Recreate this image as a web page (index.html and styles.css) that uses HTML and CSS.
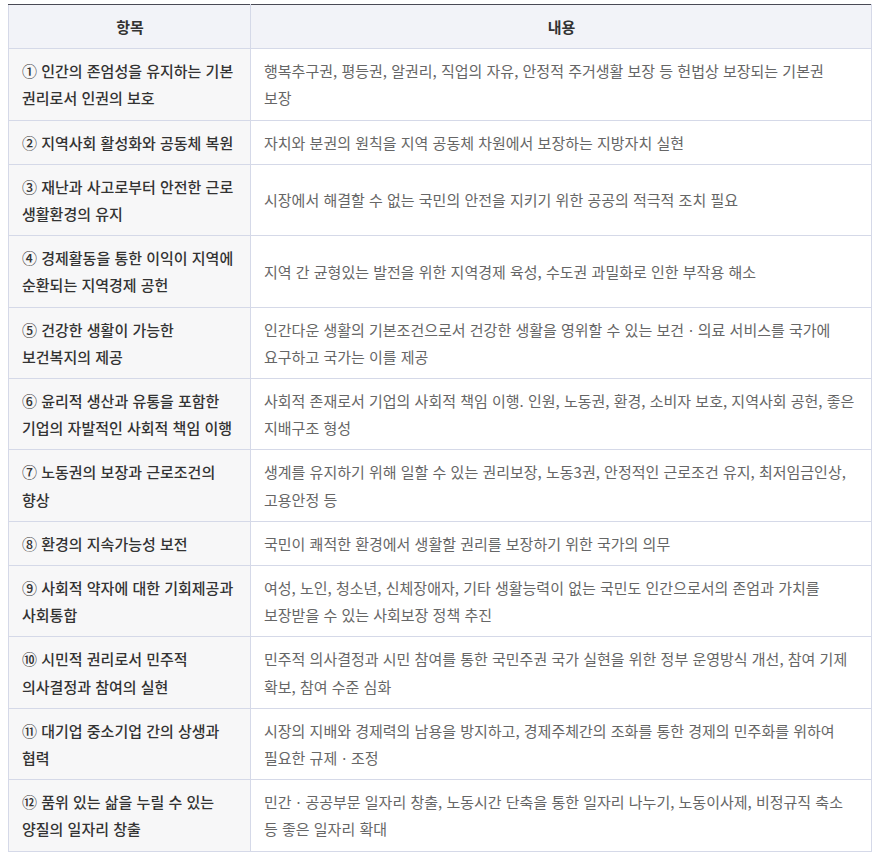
FILE: index.html
```html
<!DOCTYPE html>
<html lang="ko">
<head>
  <meta charset="UTF-8" />
  <title>항목과 내용</title>
  <link rel="stylesheet" href="styles.css">
</head>
<body>
  <div class="wrap">
    <table class="info-table">
      <colgroup>
        <col class="col-item" />
        <col class="col-desc" />
      </colgroup>
      <thead>
        <tr>
          <th>항목</th>
          <th>내용</th>
        </tr>
      </thead>
      <tbody>
        <tr>
          <td class="item">① 인간의 존엄성을 유지하는 기본 권리로서 인권의 보호</td>
          <td>행복추구권, 평등권, 알권리, 직업의 자유, 안정적 주거생활 보장 등 헌법상 보장되는 기본권<br>보장</td>
        </tr>
        <tr>
          <td class="item">② 지역사회 활성화와 공동체 복원</td>
          <td>자치와 분권의 원칙을 지역 공동체 차원에서 보장하는 지방자치 실현</td>
        </tr>
        <tr>
          <td class="item">③ 재난과 사고로부터 안전한 근로 생활환경의 유지</td>
          <td>시장에서 해결할 수 없는 국민의 안전을 지키기 위한 공공의 적극적 조치 필요</td>
        </tr>
        <tr>
          <td class="item">④ 경제활동을 통한 이익이 지역에 순환되는 지역경제 공헌</td>
          <td>지역 간 균형있는 발전을 위한 지역경제 육성, 수도권 과밀화로 인한 부작용 해소</td>
        </tr>
        <tr>
          <td class="item">⑤ 건강한 생활이 가능한<br>보건복지의 제공</td>
          <td>인간다운 생활의 기본조건으로서 건강한 생활을 영위할 수 있는 보건ㆍ의료 서비스를 국가에 요구하고 국가는 이를 제공</td>
        </tr>
        <tr>
          <td class="item">⑥ 윤리적 생산과 유통을 포함한 기업의 자발적인 사회적 책임 이행</td>
          <td>사회적 존재로서 기업의 사회적 책임 이행. 인원, 노동권, 환경, 소비자 보호, 지역사회 공헌, 좋은 지배구조 형성</td>
        </tr>
        <tr>
          <td class="item">⑦ 노동권의 보장과 근로조건의 향상</td>
          <td>생계를 유지하기 위해 일할 수 있는 권리보장, 노동3권, 안정적인 근로조건 유지, 최저임금인상, 고용안정 등</td>
        </tr>
        <tr>
          <td class="item">⑧ 환경의 지속가능성 보전</td>
          <td>국민이 쾌적한 환경에서 생활할 권리를 보장하기 위한 국가의 의무</td>
        </tr>
        <tr>
          <td class="item">⑨ 사회적 약자에 대한 기회제공과 사회통합</td>
          <td>여성, 노인, 청소년, 신체장애자, 기타 생활능력이 없는 국민도 인간으로서의 존엄과 가치를 보장받을 수 있는 사회보장 정책 추진</td>
        </tr>
        <tr>
          <td class="item">⑩ 시민적 권리로서 민주적<br>의사결정과 참여의 실현</td>
          <td>민주적 의사결정과 시민 참여를 통한 국민주권 국가 실현을 위한 정부 운영방식 개선, 참여 기제 확보, 참여 수준 심화</td>
        </tr>
        <tr>
          <td class="item">⑪ 대기업 중소기업 간의 상생과 협력</td>
          <td>시장의 지배와 경제력의 남용을 방지하고, 경제주체간의 조화를 통한 경제의 민주화를 위하여 필요한 규제ㆍ조정</td>
        </tr>
        <tr>
          <td class="item">⑫ 품위 있는 삶을 누릴 수 있는 양질의 일자리 창출</td>
          <td>민간ㆍ공공부문 일자리 창출, 노동시간 단축을 통한 일자리 나누기, 노동이사제, 비정규직 축소<br>등 좋은 일자리 확대</td>
        </tr>
      </tbody>
    </table>
  </div>
</body>
</html>
```

FILE: styles.css
```css
body {
  margin: 0;
  font-family: "Noto Sans CJK KR", "Noto Sans", sans-serif;
  background-color: #fff;
  color: #666;
}

.wrap {
  padding: 4px 9px 0 8px;
}

.info-table {
  width: 100%;
  border-collapse: collapse;
  table-layout: fixed;
  font-size: 15px;
  line-height: 27.2px;
  word-break: keep-all;
}

.col-item {
  width: 242px;
}

.info-table th,
.info-table td {
  border: 1px solid #d5d9e8;
  padding: 8px 12px 8px 13px;
  text-align: left;
  vertical-align: middle;
}

.info-table thead th {
  border-top: 1px solid #4a4a55;
  background-color: #f2f3f8;
  color: #333;
  font-weight: 700;
  text-align: center;
}

.info-table td.item {
  background-color: #f7f7f8;
  color: #333;
  font-weight: 500;
}
```
